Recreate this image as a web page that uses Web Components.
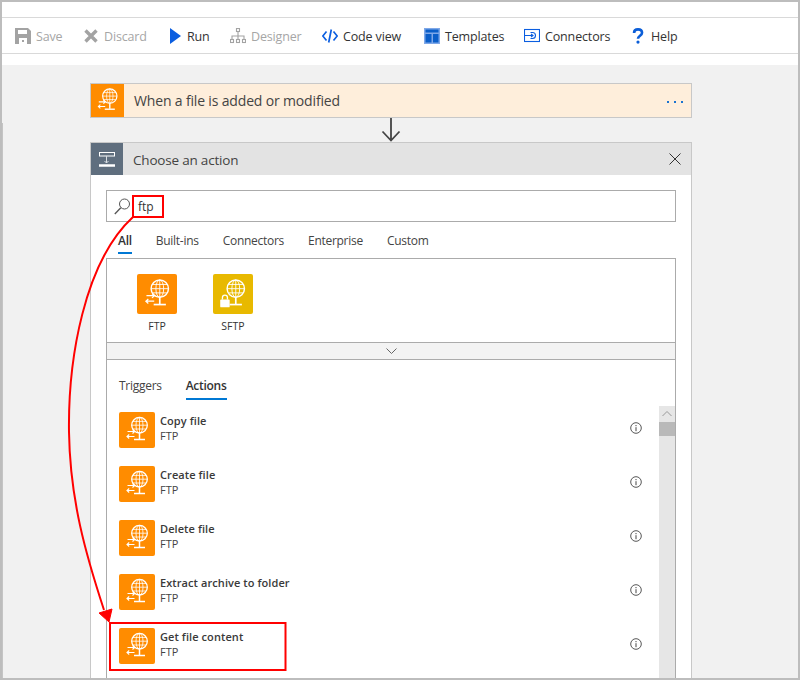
<!DOCTYPE html>
<html lang="en">
<head>
<meta charset="utf-8">
<title>Logic Apps Designer</title>
<style>
    html, body { margin: 0; padding: 0; }
    body {
        width: 800px;
        height: 680px;
        overflow: hidden;
        font-family: "Open Sans", "Noto Sans", sans-serif;
        font-size: 12.5px;
        color: #333;
    }
</style>
</head>
<body>
<designer-page>
    <app-toolbar slot="toolbar">
        <tool-button icon="save" width="69" disabled>Save</tool-button>
        <tool-button icon="discard" width="85" disabled>Discard</tool-button>
        <tool-button icon="run" width="61">Run</tool-button>
        <tool-button icon="designer" width="92" disabled>Designer</tool-button>
        <tool-button icon="code" width="102">Code view</tool-button>
        <tool-button icon="templates" width="100">Templates</tool-button>
        <tool-button icon="connectors" width="108">Connectors</tool-button>
        <tool-button icon="help" width="60">Help</tool-button>
    </app-toolbar>

    <trigger-card>When a file is added or modified</trigger-card>
    <flow-arrow></flow-arrow>

    <action-panel heading="Choose an action">
        <search-box value="ftp"></search-box>
        <tab-row slot="tabs" inset="12" gap="24" spacing="9">
            <tab-item active>All</tab-item>
            <tab-item>Built-ins</tab-item>
            <tab-item>Connectors</tab-item>
            <tab-item>Enterprise</tab-item>
            <tab-item>Custom</tab-item>
        </tab-row>
        <results-box slot="results">
            <connector-tile slot="tiles" kind="ftp">FTP</connector-tile>
            <connector-tile slot="tiles" kind="sftp">SFTP</connector-tile>
            <tab-row slot="subtabs" inset="12" gap="24" spacing="16" style="--tab-h: 24px">
                <tab-item>Triggers</tab-item>
                <tab-item active>Actions</tab-item>
            </tab-row>
            <action-row title="Copy file"></action-row>
            <action-row title="Create file"></action-row>
            <action-row title="Delete file"></action-row>
            <action-row title="Extract archive to folder"></action-row>
            <action-row title="Get file content"></action-row>
        </results-box>
    </action-panel>

    <red-notes></red-notes>
</designer-page>

<script>
const TOOL_ICONS = {
    save: `<path fill="#a3a3a3" d="M0 0h13l3 3v13H0z"/><path fill="#fff" d="M3 2h9v4H3zM4 10h8v6H4z"/><path fill="#a3a3a3" d="M7 12h2v2H7z"/>`,
    discard: `<path stroke="#a3a3a3" stroke-width="3.4" fill="none" d="M1.5 2.500l11 11M12.500 2.500l-11 11"/>`,
    run: `<path fill="#0b5ee0" d="M1 0l11 8-11 8z"/>`,
    designer: `<g fill="none" stroke="#a3a3a3" stroke-width="1.1"><rect x="6.5" y=".5" width="3" height="3"/><rect x=".5" y="11.5" width="3" height="3"/><rect x="6.5" y="11.5" width="3" height="3"/><rect x="12.5" y="11.5" width="3" height="3"/><path d="M8 3.5v8M2 11.5V8h12v3.5"/></g>`,
    code: `<g fill="none" stroke="#0b5ee0" stroke-width="1.7"><path d="M4.5 3.5L.8 8l3.7 4.5M11.5 3.5L15.2 8l-3.7 4.5"/><path d="M9.3 1.5L6.7 14.5"/></g>`,
    templates: `<path fill="#7fa8e8" d="M0 0h16v16H0z"/><path fill="#0b5ec8" d="M1.5 1.500h13v3h-13zM1.500 6h6v8.500h-6zM9 6h5.500v8.500H9z"/>`,
    connectors: `<g fill="none" stroke="#0b5ee0" stroke-width="1.100"><rect x=".5" y="1.500" width="15" height="12"/><path d="M.5 7.500h8.500M6.500 4.500h2a3 3 0 0 1 0 6h-2M7 6l2 1.500L7 9"/></g>`,
    help: `<path fill="none" stroke="#0b5ed8" stroke-width="2.800" d="M1.800 5.200C1.800 2.800 3.500 1.500 6 1.500s4.300 1.400 4.300 3.600c0 3.100-4.300 3.300-4.300 6.400"/><circle cx="6" cy="15" r="1.700" fill="#0b5ed8"/>`
};
const TOOL_VIEWBOX = { help: "0 0 12 17", run: "0 0 13 16" };

class DesignerPage extends HTMLElement {
    constructor() {
        super();
        this.attachShadow({ mode: "open" });
        this.shadowRoot.innerHTML = `
            <style>
                :host {
                    display: block;
                    position: relative;
                    box-sizing: border-box;
                    width: 800px;
                    height: 680px;
                    border: 2px solid #bdbdbd;
                    background: #fff;
                    overflow: hidden;
                }
                .canvas {
                    background: #f1f1f1;
                    margin-top: 11px;
                    padding: 18px 106px 0 88px;
                    height: 620px;
                    overflow: hidden;
                }
                .edge {
                    position: absolute;
                    left: 0;
                    top: 121px;
                    bottom: 0;
                    width: 1px;
                    background: #c4c4c4;
                }
            </style>
            <slot name="toolbar"></slot>
            <div class="canvas"><slot></slot></div>
            <div class="edge"></div>
        `;
    }
}
customElements.define('designer-page', DesignerPage);

class AppToolbar extends HTMLElement {
    constructor() {
        super();
        this.attachShadow({ mode: "open" });
        this.shadowRoot.innerHTML = `
            <style>
                :host {
                    display: flex;
                    align-items: center;
                    box-sizing: border-box;
                    height: 37px;
                    margin-top: 15px;
                    padding-left: 13px;
                    border-top: 1px solid #d9d9d9;
                    border-bottom: 1px solid #d9d9d9;
                }
            </style>
            <slot></slot>
        `;
    }
}
customElements.define('app-toolbar', AppToolbar);

class ToolButton extends HTMLElement {
    constructor() {
        super();
        this.attachShadow({ mode: "open" });
        const icon = this.getAttribute("icon");
        const box = TOOL_VIEWBOX[icon] || "0 0 16 16";
        const iconW = icon === "help" ? 12 : icon === "run" ? 13 : 16;
        const gapAfter = icon === "help" ? 7 : icon === "discard" ? 4 : 5;
        this.shadowRoot.innerHTML = `
            <style>
                :host {
                    display: flex;
                    align-items: center;
                    flex: none;
                    width: ${this.getAttribute("width")}px;
                    color: #333;
                    font-size: 12.5px;
                    letter-spacing: -.15px;
                }
                :host([disabled]) { color: #a6a6a6; }
                svg { flex: none; margin-right: ${gapAfter}px; }
                .label { padding-top: 2px; }
            </style>
            <svg width="${iconW}" height="16" viewBox="${box}">${TOOL_ICONS[icon]}</svg>
            <span class="label"><slot></slot></span>
        `;
    }
}
customElements.define('tool-button', ToolButton);

class FtpIcon extends HTMLElement {
    constructor() {
        super();
        this.attachShadow({ mode: "open" });
        const size = this.getAttribute("size") || 36;
        const kind = this.getAttribute("kind") || "ftp";
        const radius = this.getAttribute("radius") || 0;
        const extra = kind === "sftp"
            ? `<rect x="6.5" y="23" width="8.5" height="7" rx=".8" fill="#fff"/><path d="M8.500 23v-1.800a2.200 2.200 0 0 1 4.500 0V23" fill="none" stroke="#fff" stroke-width="1.200"/>`
            : `<path d="M8.500 19.500H15.500M13.500 17.500l2.200 2-2.200 2M15.500 24.500H8M10.200 22.500L8 24.500l2.200 2" fill="none" stroke="#fff" stroke-width="1.100"/>`;
        this.shadowRoot.innerHTML = `
            <style>
                :host {
                    display: block;
                    flex: none;
                    width: ${size}px;
                    height: ${size}px;
                    border-radius: ${radius}px;
                    background: ${kind === "sftp" ? "#e8b900" : "#ff8c00"};
                }
                svg { display: block; }
            </style>
            <svg width="${size}" height="${size}" viewBox="0 0 36 36">
                <g fill="none" stroke="#fff" stroke-width=".8">
                    <circle cx="20.500" cy="13.200" r="7.800" stroke-width="1.300"/>
                    <ellipse cx="20.500" cy="13.200" rx="3.500" ry="7.800"/>
                    <path d="M20.500 5.400v15.600M12.700 13.200h15.600M14 9.400h13M14 17h13"/>
                    <path d="M20.500 21v6" stroke-width="1.500"/>
                    <path d="M15 27.500h11" stroke-width="1.500"/>
                </g>
                ${extra}
            </svg>
        `;
    }
}
customElements.define('ftp-icon', FtpIcon);

class TriggerCard extends HTMLElement {
    constructor() {
        super();
        this.attachShadow({ mode: "open" });
        this.shadowRoot.innerHTML = `
            <style>
                :host {
                    display: flex;
                    align-items: center;
                    box-sizing: border-box;
                    height: 35px;
                    background: #feeedb;
                    border: 1px solid #c8c8c8;
                    font-size: 14px;
                    letter-spacing: -.16px;
                    color: #444;
                }
                .title { flex: 1; padding-left: 10px; }
                svg { display: block; margin: 3px 8px 0 0; }
            </style>
            <ftp-icon size="33"></ftp-icon>
            <div class="title"><slot></slot></div>
            <svg width="16" height="2" viewBox="0 0 16 2" fill="#1a73d0">
                <rect width="2" height="2"/><rect x="7" width="2" height="2"/><rect x="14" width="2" height="2"/>
            </svg>
        `;
    }
}
customElements.define('trigger-card', TriggerCard);

class FlowArrow extends HTMLElement {
    constructor() {
        super();
        this.attachShadow({ mode: "open" });
        this.shadowRoot.innerHTML = `
            <style>
                :host { display: flex; justify-content: center; height: 24px; }
                svg { display: block; }
            </style>
            <svg width="20" height="24" viewBox="0 0 20 24" fill="none" stroke="#444" stroke-width="1.800">
                <path d="M10 0v22M1.500 13.500L10 22.500l8.500-9"/>
            </svg>
        `;
    }
}
customElements.define('flow-arrow', FlowArrow);

class ActionPanel extends HTMLElement {
    constructor() {
        super();
        this.attachShadow({ mode: "open" });
        this.shadowRoot.innerHTML = `
            <style>
                :host {
                    display: block;
                    box-sizing: border-box;
                    background: #fff;
                    border: 1px solid #c8c8c8;
                    height: 640px;
                }
                header {
                    display: flex;
                    align-items: center;
                    height: 32px;
                    background: #e3e3e3;
                    font-size: 13.5px;
                    letter-spacing: -.2px;
                    color: #444;
                }
                .badge {
                    width: 32px;
                    height: 32px;
                    background: #5f6e7e;
                    flex: none;
                }
                .badge svg { display: block; }
                h2 {
                    flex: 1;
                    margin: 0;
                    padding: 1px 0 0 10px;
                    font: inherit;
                }
                .close { margin-right: 10px; display: block; }
                .body { padding: 15px 15px 0; }
            </style>
            <header>
                <div class="badge">
                    <svg width="32" height="32" viewBox="0 0 32 32" fill="none" stroke="#fff">
                        <rect x="8.500" y="9.500" width="15" height="3.500"/>
                        <path d="M15.500 13v7M13.500 18l2 2 2-2" stroke="#d8dde2"/>
                        <path d="M8 22.500h16" stroke-width="2.500"/>
                    </svg>
                </div>
                <h2>${this.getAttribute("heading")}</h2>
                <svg class="close" width="12" height="12" viewBox="0 0 12 12" stroke="#333" stroke-width="1">
                    <path d="M.5.5l11 11M11.500.5l-11 11"/>
                </svg>
            </header>
            <div class="body">
                <slot></slot>
                <slot name="tabs"></slot>
                <slot name="results"></slot>
            </div>
        `;
    }
}
customElements.define('action-panel', ActionPanel);

class SearchBox extends HTMLElement {
    constructor() {
        super();
        this.attachShadow({ mode: "open" });
        this.shadowRoot.innerHTML = `
            <style>
                :host {
                    display: flex;
                    align-items: center;
                    box-sizing: border-box;
                    height: 32px;
                    border: 1px solid #ababab;
                    padding-left: 7px;
                    font-size: 12px;
                    color: #333;
                }
                svg { display: block; margin-right: 8px; }
            </style>
            <svg width="16" height="17" viewBox="0 0 16 17" fill="none" stroke="#555" stroke-width="1">
                <circle cx="10.500" cy="6" r="5"/>
                <path d="M6.800 9.700L.8 16" stroke-width="1.300"/>
            </svg>
            <span>${this.getAttribute("value")}</span>
        `;
    }
}
customElements.define('search-box', SearchBox);

class TabRow extends HTMLElement {
    constructor() {
        super();
        this.attachShadow({ mode: "open" });
        this.shadowRoot.innerHTML = `
            <style>
                :host {
                    display: flex;
                    gap: ${this.getAttribute("gap")}px;
                    padding: ${this.getAttribute("spacing")}px 0 0 ${this.getAttribute("inset")}px;
                }
            </style>
            <slot></slot>
        `;
    }
}
customElements.define('tab-row', TabRow);

class TabItem extends HTMLElement {
    constructor() {
        super();
        this.attachShadow({ mode: "open" });
        this.shadowRoot.innerHTML = `
            <style>
                :host {
                    display: block;
                    box-sizing: border-box;
                    height: var(--tab-h, 23px);
                    line-height: 20px;
                    font-size: 12px;
                    letter-spacing: -.28px;
                    color: #444;
                    border-bottom: 2px solid transparent;
                }
                :host([active]) {
                    font-weight: 600;
                    color: #333;
                    border-bottom-color: #0078d4;
                }
            </style>
            <slot></slot>
        `;
    }
}
customElements.define('tab-item', TabItem);

class ResultsBox extends HTMLElement {
    constructor() {
        super();
        this.attachShadow({ mode: "open" });
        this.shadowRoot.innerHTML = `
            <style>
                :host {
                    display: block;
                    box-sizing: border-box;
                    margin-top: 4px;
                    height: 500px;
                    border: 1px solid #ababab;
                }
                .tiles {
                    display: flex;
                    height: 83px;
                    box-sizing: border-box;
                    padding: 15px 0 0 14px;
                    gap: 4px;
                }
                .band {
                    display: flex;
                    justify-content: center;
                    align-items: center;
                    box-sizing: border-box;
                    height: 18px;
                    background: #f3f3f3;
                    border-top: 1px solid #ababab;
                    border-bottom: 1px solid #ababab;
                }
                .list { position: relative; }
                .rows { margin-top: 12px; }
                .scroll {
                    position: absolute;
                    right: 0;
                    top: 46px;
                    width: 16px;
                    height: 400px;
                    background: #e6e6e6;
                }
                .scroll svg { display: block; }
                .thumb { height: 14px; background: #b9b9b9; }
            </style>
            <div class="tiles"><slot name="tiles"></slot></div>
            <div class="band">
                <svg width="11" height="6" viewBox="0 0 11 6" fill="none" stroke="#666"><path d="M.5.5l5 5 5-5"/></svg>
            </div>
            <div class="list">
                <slot name="subtabs"></slot>
                <div class="rows"><slot></slot></div>
                <div class="scroll">
                    <svg width="16" height="16" viewBox="0 0 16 16" fill="none" stroke="#999"><path d="M3.500 10l4.500-4.500 4.500 4.500"/></svg>
                    <div class="thumb"></div>
                </div>
            </div>
        `;
    }
}
customElements.define('results-box', ResultsBox);

class ConnectorTile extends HTMLElement {
    constructor() {
        super();
        this.attachShadow({ mode: "open" });
        this.shadowRoot.innerHTML = `
            <style>
                :host {
                    display: flex;
                    flex-direction: column;
                    align-items: center;
                    width: 72px;
                    font-size: 10.5px;
                    color: #333;
                }
                .label { margin-top: 4px; line-height: 16px; }
            </style>
            <ftp-icon size="40" radius="2" kind="${this.getAttribute("kind")}"></ftp-icon>
            <div class="label"><slot></slot></div>
        `;
    }
}
customElements.define('connector-tile', ConnectorTile);

class ActionRow extends HTMLElement {
    constructor() {
        super();
        this.attachShadow({ mode: "open" });
        this.shadowRoot.innerHTML = `
            <style>
                :host {
                    display: flex;
                    align-items: flex-start;
                    box-sizing: border-box;
                    height: 54px;
                    padding-left: 12px;
                }
                .text { flex: 1; margin-left: 5px; font-size: 11px; line-height: 15px; color: #444; }
                .name { font-weight: 600; color: #3a3a3a; margin-top: 1px; letter-spacing: .08px; }
                svg { display: block; margin: 10px 33px 0 0; }
            </style>
            <ftp-icon size="36" radius="2"></ftp-icon>
            <div class="text">
                <div class="name">${this.getAttribute("title")}</div>
                <div>FTP</div>
            </div>
            <svg width="12" height="12" viewBox="0 0 12 12" fill="none" stroke="#444">
                <circle cx="6" cy="6" r="5.300" stroke-width=".9"/>
                <path d="M6 5.200V9.200M6 3v1.200" stroke-width="1"/>
            </svg>
        `;
    }
}
customElements.define('action-row', ActionRow);

// red callouts drawn over the screenshot, free placement on purpose
class RedNotes extends HTMLElement {
    constructor() {
        super();
        this.attachShadow({ mode: "open" });
        this.shadowRoot.innerHTML = `
            <style>
                :host { position: absolute; left: -2px; top: -2px; pointer-events: none; }
                svg { display: block; }
            </style>
            <svg width="800" height="680" viewBox="0 0 800 680" fill="none" stroke="#f00" stroke-width="2">
                <rect x="133" y="196" width="30" height="21"/>
                <rect x="110" y="623" width="175.500" height="47"/>
                <path d="M133 217C84 262 68 360 69 432C70 500 86 555 104 610"/>
                <path d="M99 613L112 609L109 622Z" fill="#f00" stroke-width="1"/>
            </svg>
        `;
    }
}
customElements.define('red-notes', RedNotes);
</script>
</body>
</html>
